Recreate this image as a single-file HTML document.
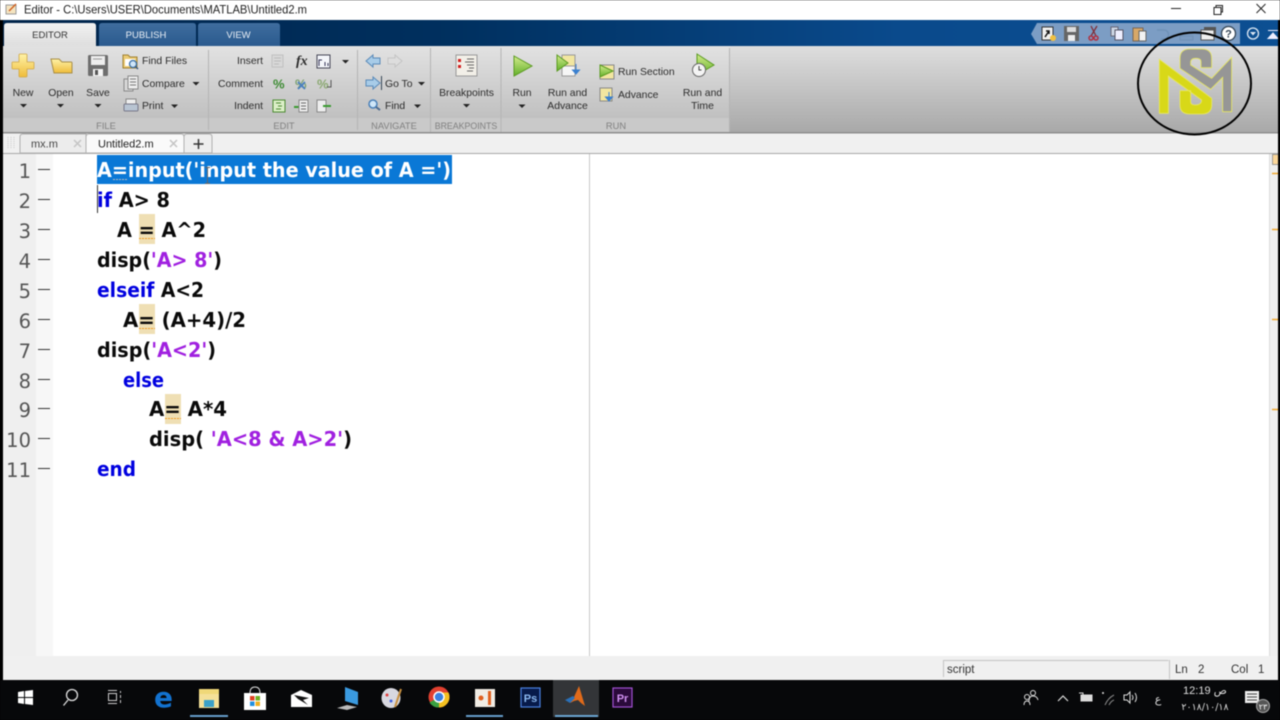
<!DOCTYPE html>
<html><head><meta charset="utf-8"><style>
html,body{margin:0;padding:0;background:#000;width:1280px;height:720px;overflow:hidden}
svg{display:block;filter:blur(.4px)}
text{font-family:"Liberation Sans",sans-serif;font-size:10.4px;fill:#2b2b2b}
.c text{font-family:"DejaVu Sans",sans-serif;font-weight:bold;font-size:20.5px;fill:#0a0a0a}
.k{fill:#0000e0}.s{fill:#a020e0}
.n{font-family:"DejaVu Sans",sans-serif;font-size:19.5px;fill:#555;text-anchor:end}
.f{font-size:9.3px;fill:#808080;text-anchor:middle}
.m{text-anchor:middle}.e{text-anchor:end}
.d{fill:#222}
</style></head><body>
<svg width="1280" height="720" viewBox="0 0 1280 720" xmlns="http://www.w3.org/2000/svg">
<defs>
<linearGradient id="bar" x1="0" x2="1"><stop offset="0" stop-color="#00244a"/><stop offset=".35" stop-color="#00305f"/><stop offset=".7" stop-color="#0a4a8c"/><stop offset="1" stop-color="#0c4f92"/></linearGradient>
<linearGradient id="rib" x1="0" x2="0" y1="0" y2="1"><stop offset="0" stop-color="#dedede"/><stop offset="1" stop-color="#a8a8a8"/></linearGradient>
<linearGradient id="sec" x1="0" x2="0" y1="0" y2="1"><stop offset="0" stop-color="#e2e2e2"/><stop offset="1" stop-color="#c0c0c0"/></linearGradient>
<linearGradient id="tab" x1="0" x2="0" y1="0" y2="1"><stop offset="0" stop-color="#f2f2f2"/><stop offset="1" stop-color="#dedede"/></linearGradient>
<linearGradient id="tb" x1="0" x2="0" y1="0" y2="1"><stop offset="0" stop-color="#3f6d9e"/><stop offset="1" stop-color="#2a5a8e"/></linearGradient>
<linearGradient id="gr" x1="0" x2="0" y1="0" y2="1"><stop offset="0" stop-color="#d4ec8c"/><stop offset="1" stop-color="#62b02a"/></linearGradient>
<linearGradient id="yl" x1="0" x2="0" y1="0" y2="1"><stop offset="0" stop-color="#fff3a8"/><stop offset="1" stop-color="#efbc3a"/></linearGradient>
</defs>
<rect width="1280" height="720" fill="#000"/>
<!-- title bar -->
<rect width="1280" height="20" fill="#fff"/>
<path d="M6 5h10v9H6z" fill="#f4e4c0" stroke="#999"/><path d="M9 11l7-7" stroke="#d06020" stroke-width="1.500"/>
<text x="24" y="13.500" textLength="283" lengthAdjust="spacingAndGlyphs" style="font-size:12px;fill:#222">Editor - C:\Users\USER\Documents\MATLAB\Untitled2.m</text>
<path d="M1171 8.500h10" stroke="#222"/>
<path d="M1214 7.500h7v7h-7zM1216 7V5.500h6.500V12H1221" fill="none" stroke="#222"/>
<path d="M1256.500 4l9 9M1265.500 4l-9 9" stroke="#222"/>
<!-- blue bar -->
<rect x="3" y="20" width="1275" height="26" fill="url(#bar)"/>
<path d="M4 46V26q0-3 3-3h86q3 0 3 3v20z" fill="url(#tab)"/>
<path d="M99 46V26q0-3 3-3h91q3 0 3 3v20z" fill="url(#tb)"/>
<path d="M198 46V26q0-3 3-3h76q3 0 3 3v20z" fill="url(#tb)"/>
<text x="50" y="38" class="m" style="font-size:9.500px;fill:#333">EDITOR</text>
<text x="146" y="38" class="m" style="font-size:9.500px;fill:#e8eef5">PUBLISH</text>
<text x="238.500" y="38" class="m" style="font-size:9.500px;fill:#e8eef5">VIEW</text>
<!-- quick access -->
<path d="M1031 34l6-11h203v21h-203z" fill="#7c9dc4"/>
<rect x="1042" y="27" width="11" height="13" fill="#f0f0f0" stroke="#333"/><path d="M1045 37l4-6M1046 31h3v3" stroke="#111" stroke-width="1.500" fill="none"/><circle cx="1053" cy="38" r="3" fill="#f0c040"/>
<rect x="1064" y="26" width="15" height="15" fill="#666"/><rect x="1067" y="27" width="9" height="5" fill="#ddd"/><rect x="1068" y="35" width="7" height="6" fill="#eee"/>
<path d="M1091 36l6-10M1096 36l-5-10" stroke="#80303a" stroke-width="1.300"/><circle cx="1091" cy="38" r="2" fill="none" stroke="#b03040" stroke-width="1.500"/><circle cx="1096" cy="38" r="2" fill="none" stroke="#b03040" stroke-width="1.500"/>
<rect x="1111" y="27" width="7" height="9" fill="#cdd6e4" stroke="#667"/><rect x="1115" y="30" width="8" height="10" fill="#eef" stroke="#556"/>
<rect x="1133" y="28" width="10" height="13" fill="#d8a868" stroke="#765"/><rect x="1139" y="31" width="7" height="10" fill="#f2f2f2" stroke="#666"/>
<path d="M1157 30h7a4 4 0 0 1 0 9h-3" fill="none" stroke="#6f92b8" stroke-width="1.500"/><path d="M1180 36h13v4h-13z" fill="#7a9ac0" stroke="#6f90b5"/>
<rect x="1204" y="27" width="12" height="9" fill="#555"/><rect x="1201" y="30" width="13" height="10" fill="#eee" stroke="#555"/>
<circle cx="1228.500" cy="33.500" r="7" fill="#fff" stroke="#345" stroke-width="1.300"/><text x="1228.500" y="37.500" class="m" style="font-size:11px;font-weight:bold;fill:#345">?</text>
<circle cx="1253" cy="33.500" r="5.500" fill="none" stroke="#dde8f4" stroke-width="1.300"/><path d="M1250 32h6l-3 3.500z" fill="#dde8f4"/>
<path d="M1268 30.500h10M1268 38.500h10l-5-5.500z" fill="#eef" stroke="#eef"/>
<!-- ribbon -->
<rect x="3" y="46" width="1275" height="87" fill="url(#rib)"/>
<rect x="3" y="46" width="727" height="72" fill="url(#sec)"/>
<rect x="3" y="118" width="727" height="14" fill="#c9c9c9"/>
<rect x="3" y="132" width="1275" height="1.500" fill="#8e8e8e"/>
<path d="M208.500 50v80M357.500 50v80M501 48v84M430.500 48v84M729.500 48v84" stroke="#b4b4b4"/>
<text x="106" y="129" class="f">FILE</text><text x="284" y="129" class="f">EDIT</text><text x="394" y="129" class="f">NAVIGATE</text><text x="466" y="129" class="f" style="font-size:8.800px">BREAKPOINTS</text><text x="616" y="129" class="f">RUN</text>
<!-- New -->
<path d="M19 55q0-1 1-1h6q1 0 1 1v7h6q1 0 1 1v5q0 1-1 1h-6v7q0 1-1 1h-6q-1 0-1-1v-7h-6q-1 0-1-1v-5q0-1 1-1h6z" fill="url(#yl)" stroke="#d0a848" stroke-width=".8"/>
<text x="23" y="96" class="m">New</text><path class="d" d="M20 104h7l-3.500 3.500z"/>
<path d="M51 59h8l3 3h9q1 0 1 1v10H54z" fill="url(#yl)" stroke="#a88e48"/>
<text x="61" y="96" class="m">Open</text><path class="d" d="M57 104h7l-3.500 3.500z"/>
<rect x="88" y="55" width="20" height="21" rx="1.500" fill="#6e6e6e"/><rect x="91" y="56" width="14" height="9" fill="#eee"/><path d="M93 59h9" stroke="#999"/><rect x="93" y="69" width="10" height="7" fill="#f4f4f4"/><rect x="95" y="70" width="3" height="5" fill="#555"/>
<text x="98" y="96" class="m">Save</text><path class="d" d="M94.500 104h7l-3.500 3.500z"/>
<path d="M123 55h5l2 2h7v11h-14z" fill="#eccb74" stroke="#a08030"/><rect x="125" y="59" width="10" height="7" fill="#fff"/><circle cx="133" cy="64" r="3.500" fill="#cfe6f8" stroke="#3a70a8" stroke-width="1.300"/><path d="M135.500 66.500l2.500 2.500" stroke="#3a5a80" stroke-width="1.500"/>
<text x="142" y="64">Find Files</text>
<rect x="124" y="79" width="9" height="12" fill="#d8d8d8" stroke="#888"/><rect x="128" y="76" width="10" height="13" fill="#eee" stroke="#888"/><path d="M130 79h6M130 82h6M130 85h6" stroke="#777"/><text x="142" y="87">Compare</text><path class="d" d="M192.500 82h7l-3.500 3.500z"/>
<rect x="126" y="99" width="10" height="6" fill="#eee" stroke="#888"/><rect x="124" y="104" width="14" height="7" rx="1" fill="#b8c4d2" stroke="#778"/><text x="142" y="109">Print</text><path class="d" d="M171 104.500h7l-3.500 3.500z"/>
<!-- edit -->
<text x="263" y="64" class="e">Insert</text><text x="263" y="87" class="e">Comment</text><text x="263" y="109" class="e">Indent</text>
<rect x="272" y="55" width="11" height="12" fill="#d8d8d8" stroke="#c0c0c0"/><path d="M274 58h7M274 61h7M274 64h5" stroke="#bbb"/>
<text x="296" y="65" style="font-family:'Liberation Serif',serif;font-style:italic;font-weight:bold;font-size:14px">fx</text>
<rect x="317" y="55" width="13" height="13" fill="#f4f6fa" stroke="#445"/><path d="M319 66v-6h3M325 66v-4M328 66v-3" stroke="#335" fill="none"/><path d="M342 60h7l-3.500 3.500z" class="d"/>
<text x="273" y="88.500" style="font-size:13px;fill:#3a8a30;font-weight:bold">%</text>
<text x="295" y="88.500" style="font-size:13px;fill:#7aa070;font-weight:bold">%</text><path d="M298 82l7 7M305 82l-7 7" stroke="#4a80c0" stroke-width="1.800"/>
<text x="317" y="88.500" style="font-size:13px;fill:#8aa870;font-weight:bold">%</text><path d="M331 80v7h-4" stroke="#555" fill="none"/>
<rect x="273" y="100" width="12" height="12" fill="#dcefc8" stroke="#4a8a30"/><path d="M276 103h5M278 106h4M276 109h5" stroke="#4a8a30"/>
<path d="M294 107h5" stroke="#3a9a30" stroke-width="2"/><rect x="299" y="100" width="9" height="12" fill="#eee" stroke="#888"/><path d="M301 103h5M301 106h5M301 109h5" stroke="#666"/>
<rect x="317" y="100" width="9" height="12" fill="#eee" stroke="#888"/><path d="M323 106h8" stroke="#3a9a30" stroke-width="2"/>
<!-- navigate -->
<path d="M366 61l7-6v3h7v6h-7v3z" fill="#a8cce8" stroke="#5a8ab8"/>
<path d="M402 61l-7-6v3h-7v6h7v3z" fill="#ddd" stroke="#c4c4c4"/>
<path d="M366 86v-6h7v-3l7 6-7 6v-3z" fill="#a8cce8" stroke="#5a8ab8"/><path d="M381.500 76v14" stroke="#345"/>
<text x="385" y="87">Go To</text><path class="d" d="M418 82h7l-3.500 3.500z"/>
<circle cx="373" cy="104" r="4" fill="#cfe6f8" stroke="#4a80b8" stroke-width="1.500"/><path d="M376 107l4 3" stroke="#4a6a90" stroke-width="2"/>
<text x="385" y="109">Find</text><path class="d" d="M414 104.500h7l-3.500 3.500z"/>
<!-- breakpoints -->
<rect x="456" y="55" width="21" height="21" fill="#f2efe8" stroke="#999"/>
<rect x="458" y="59" width="3" height="3" fill="#d02020"/><rect x="458" y="65" width="3" height="3" fill="#d02020"/>
<path d="M467 59h7M465 62h9M467 65h7M469 68h5M467 71h6" stroke="#666"/>
<text x="466.500" y="96" class="m">Breakpoints</text><path class="d" d="M463 104h7l-3.500 3.500z"/>
<!-- run -->
<path d="M514 56l18 10-18 10z" fill="url(#gr)" stroke="#5a9a20"/>
<text x="522" y="96" class="m">Run</text><path class="d" d="M518.500 104.500h7l-3.500 3.500z"/>
<rect x="562" y="55" width="13" height="21" fill="#f2e6a0" stroke="#999"/><rect x="562" y="66" width="13" height="10" fill="#f6f6f6" stroke="#999"/>
<path d="M557 55l11 8-11 8z" fill="url(#gr)" stroke="#5a9a20"/><path d="M576 64v6M572.500 70h7l-3.500 4z" fill="#3a80d0" stroke="#3a80d0"/>
<text x="567.500" y="96" class="m">Run and</text><text x="567.500" y="109" class="m">Advance</text>
<rect x="600" y="65" width="14" height="14" fill="#f2e6a0" stroke="#888"/><path d="M600 65l13 6-13 6z" fill="url(#gr)" stroke="#5a9a20"/>
<text x="618" y="75">Run Section</text>
<rect x="600" y="88" width="12" height="13" fill="#f2e6a0" stroke="#888"/><path d="M609 92v6M605.500 97h7l-3.500 4z" fill="#3a80d0" stroke="#3a80d0"/>
<text x="618" y="98">Advance</text>
<path d="M697 54l17 11-17 10z" fill="url(#gr)" stroke="#5a9a20"/><circle cx="699" cy="70" r="6.500" fill="#f4f4f4" stroke="#666"/><path d="M699 66v4h2.500" stroke="#444" fill="none"/>
<text x="702.500" y="96" class="m">Run and</text><text x="702.500" y="109" class="m">Time</text>
<!-- tab row -->
<rect x="3" y="133.500" width="1275" height="20" fill="#f0f0f0"/>
<rect x="3" y="153" width="1275" height="1" fill="#a8a8a8"/>
<path d="M8 137v12M11 137v12M14 137v12" stroke="#ccc" stroke-dasharray="1 1"/>
<path d="M20 153v-16q0-3 3-3h63v19z" fill="#ececec" stroke="#b0b0b0"/>
<path d="M86 153v-16q0-3 3-3h92q3 0 3 3v16z" fill="#fafafa" stroke="#b0b0b0"/>
<path d="M184 153v-16q0-3 3-3h22q3 0 3 3v16z" fill="#eee" stroke="#b0b0b0"/>
<text x="31" y="147.500" style="font-size:11px;fill:#444">mx.m</text>
<text x="98" y="147.500" style="font-size:11px;fill:#222">Untitled2.m</text>
<path d="M74 140l7 7M81 140l-7 7M170 140l7 7M177 140l-7 7" stroke="#c4c4c4" stroke-width="1.500"/>
<path d="M198.500 139v10M193.500 144h10" stroke="#333" stroke-width="1.500"/>
<!-- editor -->
<rect x="3" y="154" width="1275" height="502" fill="#fff"/>
<rect x="3" y="154" width="33" height="502" fill="#efefef"/>
<rect x="36" y="154" width="17" height="502" fill="#f7f7f7"/>
<rect x="589" y="154" width="1" height="502" fill="#c8c8c8"/>
<rect x="1270" y="154" width="8" height="502" fill="#eeeeee"/><rect x="1269" y="154" width="1" height="502" fill="#dcdcdc"/>
<rect x="1272.500" y="154.500" width="6" height="10" fill="#fbd79a" stroke="#888" stroke-width=".8"/>
<path d="M1272 173.500h6M1272 229.500h6M1272 319.500h6M1272 409.500h6" stroke="#f0a830" stroke-width="1.500"/>
<!-- selection / highlights -->
<rect x="97" y="155" width="355" height="29" fill="#0a78d6"/>
<rect x="139" y="214" width="16" height="30" fill="#efdfb4"/>
<rect x="139" y="304" width="16" height="30" fill="#efdfb4"/>
<rect x="165" y="394" width="16" height="30" fill="#efdfb4"/>
<path d="M113 179.500h15" stroke="#bbb" stroke-dasharray="2 1"/>
<path d="M139 238.500h16M139 328.500h16M165 418.500h16" stroke="#f09a20" stroke-dasharray="2 1"/>
<rect x="97" y="185" width="1" height="28" fill="#333"/>
<!-- numbers -->
<g transform="translate(0,.8)">
<text class="n" x="31" y="177">1</text><text class="n" x="31" y="207">2</text><text class="n" x="31" y="237">3</text><text class="n" x="31" y="267">4</text><text class="n" x="31" y="297">5</text><text class="n" x="31" y="327">6</text><text class="n" x="31" y="357">7</text><text class="n" x="31" y="387">8</text><text class="n" x="31" y="416">9</text><text class="n" x="31" y="446">10</text><text class="n" x="31" y="476">11</text>
</g>
<path d="M38 169.500h12M38 199.500h12M38 229.500h12M38 259.500h12M38 289.500h12M38 319.500h12M38 349.500h12M38 379.500h12M38 408.500h12M38 438.500h12M38 468.500h12" stroke="#333"/>
<!-- code -->
<g class="c" transform="translate(0,.8)">
<text x="97" y="176" textLength="354" lengthAdjust="spacingAndGlyphs" style="fill:#fff">A=input('input the value of A =')</text>
<text x="97" y="206" textLength="73" lengthAdjust="spacingAndGlyphs"><tspan class="k">if</tspan> A&gt; 8</text>
<text x="117" y="236" textLength="89" lengthAdjust="spacingAndGlyphs">A = A^2</text>
<text x="97" y="266" textLength="125" lengthAdjust="spacingAndGlyphs">disp(<tspan class="s">'A&gt; 8'</tspan>)</text>
<text x="97" y="296" textLength="107" lengthAdjust="spacingAndGlyphs"><tspan class="k">elseif</tspan> A&lt;2</text>
<text x="123" y="326" textLength="123" lengthAdjust="spacingAndGlyphs">A= (A+4)/2</text>
<text x="97" y="356" textLength="119" lengthAdjust="spacingAndGlyphs">disp(<tspan class="s">'A&lt;2'</tspan>)</text>
<text x="123" y="386" textLength="41" lengthAdjust="spacingAndGlyphs" style="fill:#0000e0">else</text>
<text x="149" y="415" textLength="78" lengthAdjust="spacingAndGlyphs">A= A*4</text>
<text x="149" y="445" textLength="203" lengthAdjust="spacingAndGlyphs">disp( <tspan class="s">'A&lt;8 &amp; A&gt;2'</tspan>)</text>
<text x="97" y="475" textLength="39" lengthAdjust="spacingAndGlyphs" style="fill:#0000e0">end</text>
</g>
<path d="M207.500 168v15M205 167.500h5M205 183.500h5" stroke="#666"/>
<!-- status bar -->
<rect x="3" y="656" width="1275" height="24" fill="#f0f0f0"/>
<path d="M943.500 677V660.500h225M1169.500 660v19" fill="none" stroke="#c4c4c4"/>
<text x="947" y="673" style="font-size:11.500px;fill:#333">script</text>
<text x="1175" y="673" style="font-size:11.500px;fill:#333">Ln</text><text x="1198" y="673" style="font-size:11.500px;fill:#333">2</text>
<text x="1231" y="673" style="font-size:11.500px;fill:#333">Col</text><text x="1258" y="673" style="font-size:11.500px;fill:#333">1</text>
<!-- taskbar -->
<rect y="680" width="1280" height="40" fill="#07080a"/>
<path d="M18 692l6-1v6h-6zM25 691l8-1v7h-8zM18 698h6v6l-6-1zM25 698h8v7l-8-1z" fill="#fff"/>
<circle cx="72" cy="695" r="5.500" fill="none" stroke="#ddd" stroke-width="1.300"/><path d="M68 700l-4.500 5.500" stroke="#ddd" stroke-width="1.300"/>
<path d="M108 690.500h9M108 703.500h9" stroke="#ccc"/><rect x="108.500" y="693.500" width="8" height="7" fill="none" stroke="#ccc"/><path d="M120.500 691v2M120.500 695v3M120.500 700v3" stroke="#ccc"/>
<text x="163.500" y="707" class="m" style="font-family:'DejaVu Sans',sans-serif;font-weight:bold;font-size:28px;fill:#1272d0">e</text>
<rect x="199" y="689" width="20" height="6" fill="#f0d878"/><rect x="199" y="694" width="20" height="14" fill="#f4e098"/><rect x="204" y="700" width="10" height="7" fill="#3aa0c8"/>
<rect x="190" y="715" width="38" height="2" fill="#76b9ed" opacity=".85"/>
<rect x="244" y="693" width="22" height="17" fill="#fff"/><path d="M250 693q0-6 5-6t5 6" fill="none" stroke="#ddd"/><rect x="250" y="696" width="4.500" height="4.500" fill="#e04020"/><rect x="255.500" y="696" width="4.500" height="4.500" fill="#70b020"/><rect x="250" y="701.500" width="4.500" height="4.500" fill="#2090e0"/><rect x="255.500" y="701.500" width="4.500" height="4.500" fill="#f0b020"/>
<path d="M291 695l10-5 11 5v12h-21z" fill="#fff"/><path d="M294 695l15 3-6 2 5 5-10-6z" fill="#111"/>
<path d="M345 687l13 5v13l-13-4z" fill="#3a9ae0"/><path d="M337 708l10-3 10 2-10 3z" fill="#bbb"/>
<ellipse cx="391" cy="698" rx="9.500" ry="10" fill="#d8d8e0"/><circle cx="387" cy="695" r="1.500" fill="#e04040"/><circle cx="391" cy="701" r="1.500" fill="#4060e0"/><path d="M395 707l6-18" stroke="#c89040" stroke-width="2"/>
<circle cx="439" cy="697" r="10.500" fill="#e04030"/><path d="M439 697l-9.500 5.500A11 11 0 0 0 439 707.500z" fill="#3aa040"/><path d="M439 697v10.500a10.500 10.500 0 0 0 9.500-15h-9.500z" fill="#f4c020"/><circle cx="439" cy="697" r="5" fill="#3a80e0" stroke="#fff" stroke-width="1.500"/>
<rect x="475" y="689" width="20" height="18" fill="#f0ece4"/><circle cx="481" cy="698" r="2.500" fill="#e06020"/><rect x="488" y="691" width="3" height="14" fill="#e06020"/>
<rect x="466" y="715" width="37" height="2" fill="#76b9ed" opacity=".85"/>
<rect x="521" y="688" width="19" height="19" fill="#071a4a" stroke="#4a80e0" stroke-width="1.200"/><text x="530.500" y="702" class="m" style="font-size:11px;font-weight:bold;fill:#8ab8f0">Ps</text>
<rect x="553" y="680" width="46" height="37" fill="#333538"/>
<path d="M570 703l4-6 5-11 6 20-4-3-3-3-4 1z" fill="#e06a1a"/><path d="M565 700l8-4 2 2-5 5z" fill="#2a70b8"/>
<rect x="555" y="715" width="43" height="2" fill="#76b9ed" opacity=".85"/>
<rect x="613" y="688" width="19" height="19" fill="#2a0a3a" stroke="#a050d0" stroke-width="1.200"/><text x="622.500" y="702" class="m" style="font-size:11px;font-weight:bold;fill:#d090f0">Pr</text>
<!-- tray -->
<g fill="none" stroke="#ddd"><circle cx="1033" cy="693" r="2.500"/><path d="M1029 701q0-5 4-5t5 4"/><circle cx="1027" cy="697" r="2.500"/><path d="M1024 705q0-4 3-4t3 4"/>
<path d="M1058 701l5-5 5 5" stroke-width="1.200"/>
<rect x="1081" y="695" width="11" height="6" fill="#ddd"/><path d="M1079 693h4v2"/>
<path d="M1105 705q3-7 9-10M1109 705q2-4 5-5" stroke="#888"/>
<path d="M1124 695h3l3-3v11l-3-3h-3zM1132 695q2 2.500 0 5M1135 693q3 4.500 0 9"/></g>
<circle cx="1103" cy="693" r="1" fill="#ddd"/>
<text x="1158" y="703" class="m" style="font-family:'Liberation Sans','DejaVu Sans',sans-serif;font-size:11px;fill:#ddd">ع</text>
<text x="1205" y="694" class="m" style="font-size:11px;fill:#ddd">12:19 ص</text>
<text x="1205" y="710" class="m" style="font-family:'DejaVu Sans',sans-serif;font-size:9.500px;fill:#ddd">٢٠١٨/١٠/١٨</text>
<rect x="1245" y="691" width="14" height="12" fill="#eee"/><path d="M1247 694h10M1247 697h10M1247 700h10" stroke="#444"/>
<circle cx="1263" cy="706" r="6.500" fill="#555" stroke="#aaa"/><text x="1263" y="709.500" class="m" style="font-family:'DejaVu Sans',sans-serif;font-size:8px;fill:#fff">٢٣</text>
<!-- black frame strips -->
<rect x="0" y="20" width="3" height="660" fill="#000"/>
<rect x="1278" y="20" width="2" height="660" fill="#000"/>
<!-- logo -->
<g transform="translate(1000,0) scale(.33333)" stroke="#e8e860" stroke-width="2.500">
<path d="M635 203H603V185Q603 175 588 175Q572 175 572 187V195L635 235L695 172V335H668V232L632 268L540 205V175Q540 147 570 147H605Q635 147 635 175Z" fill="#969696"/>
<path d="M478 178L635 295V315Q635 342 605 342H570Q540 342 540 315V272H572V305Q572 315 585 315Q605 315 605 300L505 228V340H478Z" fill="#d8d818"/>
</g>
<ellipse cx="1194.500" cy="83.500" rx="56.500" ry="51" fill="none" stroke="#000" stroke-width="2"/>
</svg>
</body></html>
